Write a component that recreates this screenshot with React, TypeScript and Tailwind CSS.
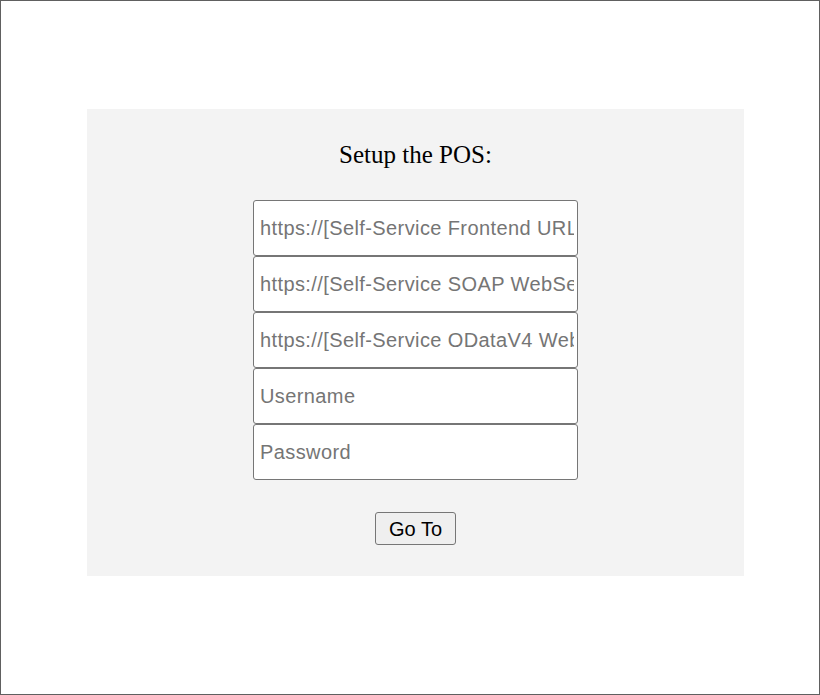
import React from 'react';

const fields = [
  'https://[Self-Service Frontend URL]',
  'https://[Self-Service SOAP WebService URL]',
  'https://[Self-Service ODataV4 WebService URL]',
  'Username',
  'Password',
];

const App: React.FC = () => {
  return (
    <div className="w-[820px] h-[695px] border border-[#606060] bg-white pt-[108px] pl-[86px]">
      <div className="w-[657px] h-[467px] bg-[#f3f3f3] flex flex-col items-center pt-[32px]">
        <h1 className="text-[25px] leading-[28px] text-black font-['Liberation_Serif','Times_New_Roman',serif] font-normal">
          Setup the POS:
        </h1>
        <div className="mt-[31px] flex flex-col w-[325px]">
          {fields.map((f) => (
            <input
              key={f}
              type={f === 'Password' ? 'password' : 'text'}
              placeholder={f}
              className="h-[56px] w-full bg-white border border-[#767676] rounded-[3px] pl-[6px] pr-[3px] text-[20px] tracking-[0.4px] text-black placeholder:text-[#757575] font-['Liberation_Sans',Arial,sans-serif] outline-none"
            />
          ))}
        </div>
        <button className="mt-[32px] h-[33px] px-[13px] bg-[#efefef] border border-[#767676] rounded-[3px] text-[20px] leading-none text-black font-['Liberation_Sans',Arial,sans-serif]">
          Go To
        </button>
      </div>
    </div>
  );
};

export default App;
